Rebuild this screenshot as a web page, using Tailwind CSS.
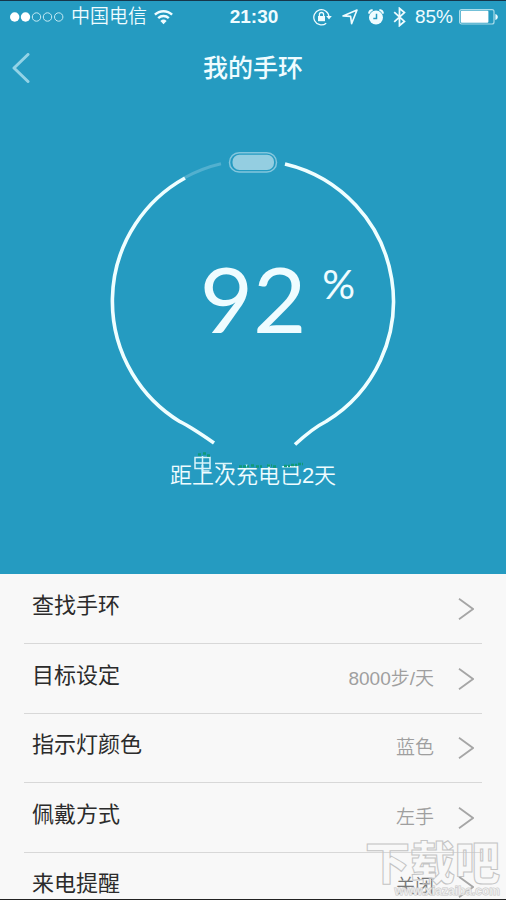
<!DOCTYPE html>
<html lang="zh-CN">
<head>
<meta charset="utf-8">
<meta name="viewport" content="width=device-width, initial-scale=1">
<title>我的手环</title>
<script src="https://cdn.jsdelivr.net/npm/@tailwindcss/browser@4"></script>
</head>
<body class="bg-[#f8f8f8] font-['Liberation_Sans','Noto_Sans_CJK_SC',sans-serif]">
<div class="relative flex h-screen flex-col overflow-hidden border-y border-t-[#16364a] border-b-[#222222]">

  <header class="shrink-0 bg-[#259bc1] pb-[82px] text-[#effcff]">
    <!-- Status bar -->
    <div class="grid h-8 grid-cols-[1fr_auto_1fr] items-center pr-2 pl-[10px] text-[19px] leading-8">
      <div class="flex items-center gap-[7px]">
        <svg class="h-3 w-[54px]" viewBox="0 0 54 12" aria-hidden="true">
          <g fill="#fff"><circle cx="4.7" cy="6" r="4.7"/><circle cx="15.5" cy="6" r="4.7"/></g>
          <g fill="none" stroke="#c5ebf5" stroke-width="1"><circle cx="26.5" cy="6" r="4.2"/><circle cx="37.5" cy="6" r="4.2"/><circle cx="48.7" cy="6" r="4.2"/></g>
        </svg>
        <span class="font-[350] whitespace-nowrap">中国电信</span>
        <svg class="h-4 w-[19px]" viewBox="0 0 19 16" fill="none" stroke="#effcff" stroke-width="2.4" aria-hidden="true">
          <path d="M.9 5.7a12.4 12.4 0 0 1 17.2 0"/><path d="M4.2 9.2a7.6 7.6 0 0 1 10.6 0"/>
          <path d="M9.5 15.2 6.4 11.9a4.6 4.6 0 0 1 6.2 0z" fill="#effcff" stroke="none"/>
        </svg>
      </div>
      <time class="font-bold">21:30</time>
      <div class="flex items-center justify-end">
        <svg class="mr-[10px] h-[18px] w-[19px]" viewBox="0 0 19 18" fill="none" stroke="#effcff" stroke-width="1.3" aria-hidden="true">
          <path d="M13.2 15.2A7.6 7.6 0 1 1 16 9"/><path d="M13.2 8h5.6L16 11.4z" fill="#effcff" stroke="none"/>
          <rect x="5" y="8" width="7" height="5.2" fill="#effcff" stroke="none"/><path d="M6.4 8.2V6.6a2.1 2.1 0 0 1 4.2 0v1.6"/>
        </svg>
        <svg class="mr-[10px] h-4 w-4" viewBox="0 0 16 16" fill="none" stroke="#effcff" stroke-width="1.6" stroke-linejoin="round" aria-hidden="true">
          <path d="M1 6.900 15 1 9.600 14.600 8.600 7.400z"/>
        </svg>
        <svg class="mr-[9px] h-4 w-4" viewBox="0 0 16 16" aria-hidden="true">
          <circle cx="8" cy="8.600" r="7" fill="#effcff"/>
          <path d="M1 4.600A4 4 0 0 1 4.600 1M15 4.600A4 4 0 0 0 11.400 1" fill="none" stroke="#effcff" stroke-width="2"/>
          <path d="M8.500 4.800v4.700H5.300" fill="none" stroke="#259bc1" stroke-width="1.500"/>
        </svg>
        <svg class="mr-[9px] h-5 w-[13px]" viewBox="0 0 13 20" fill="none" stroke="#effcff" stroke-width="1.8" aria-hidden="true">
          <path d="M1.2 5.2 11.4 14.4 6.5 18.6V1.4l4.9 4.2L1.2 14.8"/>
        </svg>
        <span class="mr-[6px]">85%</span>
        <svg class="h-4 w-[39px]" viewBox="0 0 39 16" aria-hidden="true">
          <rect x=".6" y=".6" width="34.4" height="14.4" rx="2" fill="none" stroke="#a9dcea" stroke-width="1.2"/>
          <rect x="1.8" y="1.8" width="27.6" height="12" rx="1" fill="#fff"/>
          <path d="M36.4 5v6c1.6-.6 2.4-1.7 2.4-3s-.8-2.4-2.4-3z" fill="#effcff"/>
        </svg>
      </div>
    </div>

    <nav class="grid h-[70px] grid-cols-[1fr_auto_1fr] items-center px-3">
      <button type="button" aria-label="返回" class="w-[18px]">
        <svg class="h-[30px] w-[18px]" viewBox="0 0 18 30" fill="none" stroke="#93d3e6" stroke-width="3" stroke-linecap="round" stroke-linejoin="round" aria-hidden="true"><path d="M16 1.5 2 15l14 13.500"/></svg>
      </button>
      <h1 class="text-[25px] leading-8 font-medium">我的手环</h1>
    </nav>

    <!-- Battery gauge -->
    <div class="mt-[47px] grid justify-center">
      <svg class="h-[296px] w-[286px] [grid-area:1/1]" viewBox="110 150 286 296" fill="none" aria-hidden="true">
        <path d="M185 177.5A141 141 0 0 1 221 163.700" stroke="#52b0cf" stroke-width="3"/>
        <path d="M185 178A141 141 0 0 0 180 421.700Q190 426.500 214 443" stroke="#effeff" stroke-width="3.6"/>
        <path d="M285 164A141 141 0 0 1 326 421.500Q313 428 295 444.500" stroke="#effeff" stroke-width="3.6"/>
        <rect x="229.500" y="152.700" width="47" height="19.400" rx="9.700" stroke="#83c6dd" stroke-width="1.500"/>
        <rect x="232.500" y="154.700" width="41.500" height="15.400" rx="7" fill="#94cee1"/>
      </svg>
      <p class="relative flex items-center justify-center self-start justify-self-center pt-[94px] text-[92px] leading-[108px] [grid-area:1/1] font-['Lato',sans-serif]">92<span class="absolute top-[110px] left-full ml-4 text-[41px] leading-12">%</span></p>
    </div>

    <div class="relative mx-auto mt-[14px] w-[168px]">
      <p class="text-center text-[22px] leading-8 font-[350] whitespace-nowrap">距上次充电已2天</p>
      <svg class="absolute -top-2 left-0 h-6 w-[168px]" viewBox="169 452 168 24" fill="none" aria-hidden="true">
        <path d="M195 457.500h15v11h-15zM195 463h15M202.500 456v15h7M215 463.500h17M223.500 463.500v5" stroke="#d8f4fa" stroke-width="1.500"/>
        <path d="M198 454.500h4m1-1h3m1 2h4M239 466.500h10m2-1h4m1 1h6M267 465.500h5m1 1h4M284 466h6m1-1h6m1-1h5" stroke="#0f9a78" stroke-width="2.500" stroke-dasharray="3 1"/>
      </svg>
    </div>
  </header>

  <main class="px-6 pt-px">
    <ul>
      <li class="border-b border-[#d8d8d8]">
        <a href="#find" class="flex h-[68px] items-center px-2">
          <span class="flex-1 pb-[6px] text-[22px] leading-8 text-[#2b2b2b]">查找手环</span>
          <svg class="h-[22px] w-4" viewBox="0 0 16 22" fill="none" stroke="#a6a6a6" stroke-width="1.800" aria-hidden="true"><path d="M1 .800 15 11 1 21.200"/></svg>
        </a>
      </li>
      <li class="border-b border-[#d8d8d8]">
        <a href="#goal" class="flex h-[69px] items-center px-2">
          <span class="flex-1 pb-[6px] text-[22px] leading-8 text-[#2b2b2b]">目标设定</span>
          <span class="mr-6 text-[19px] leading-7 font-[350] text-[#9f9f9f]">8000步/天</span>
          <svg class="h-[22px] w-4" viewBox="0 0 16 22" fill="none" stroke="#a6a6a6" stroke-width="1.800" aria-hidden="true"><path d="M1 .800 15 11 1 21.200"/></svg>
        </a>
      </li>
      <li class="border-b border-[#d8d8d8]">
        <a href="#light" class="flex h-[68px] items-center px-2">
          <span class="flex-1 pb-[6px] text-[22px] leading-8 text-[#2b2b2b]">指示灯颜色</span>
          <span class="mr-6 text-[19px] leading-7 font-[350] text-[#9f9f9f]">蓝色</span>
          <svg class="h-[22px] w-4" viewBox="0 0 16 22" fill="none" stroke="#a6a6a6" stroke-width="1.800" aria-hidden="true"><path d="M1 .800 15 11 1 21.200"/></svg>
        </a>
      </li>
      <li class="border-b border-[#d8d8d8]">
        <a href="#wear" class="flex h-[69px] items-center px-2">
          <span class="flex-1 pb-[6px] text-[22px] leading-8 text-[#2b2b2b]">佩戴方式</span>
          <span class="mr-6 text-[19px] leading-7 font-[350] text-[#9f9f9f]">左手</span>
          <svg class="h-[22px] w-4" viewBox="0 0 16 22" fill="none" stroke="#a6a6a6" stroke-width="1.800" aria-hidden="true"><path d="M1 .800 15 11 1 21.200"/></svg>
        </a>
      </li>
      <li>
        <a href="#call" class="flex h-[68px] items-center px-2">
          <span class="flex-1 pb-[6px] text-[22px] leading-8 text-[#2b2b2b]">来电提醒</span>
          <span class="mr-6 text-[19px] leading-7 font-[350] text-[#777777]">关闭</span>
          <svg class="h-[22px] w-4" viewBox="0 0 16 22" fill="none" stroke="#a6a6a6" stroke-width="1.800" aria-hidden="true"><path d="M1 .800 15 11 1 21.200"/></svg>
        </a>
      </li>
    </ul>
  </main>

  <!-- Site watermark -->
  <div class="pointer-events-none absolute right-[6px] bottom-0 flex flex-col items-end whitespace-nowrap">
    <span class="text-[45px] leading-[45px] font-black text-transparent [-webkit-text-stroke:1px_#c4c4c4]">下载吧</span>
    <span class="-mt-1 text-[12px] leading-4 font-bold text-[#f4f4f4]/70 [-webkit-text-stroke:1px_#c8c8c8] [paint-order:stroke]">www.xiazaiba.com</span>
  </div>
</div>
</body>
</html>
